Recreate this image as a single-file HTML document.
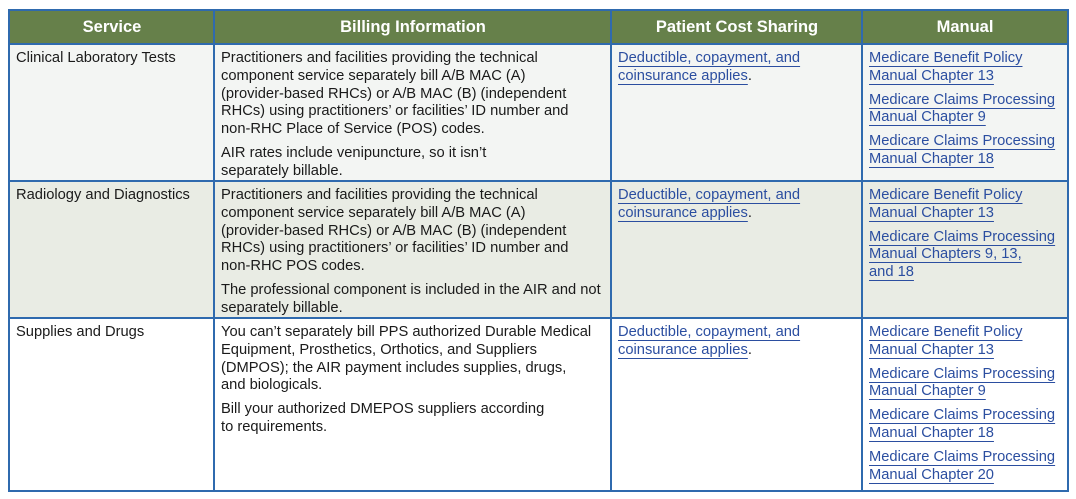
<!DOCTYPE html>
<html><head><meta charset="utf-8"><style>
*{margin:0;padding:0;box-sizing:border-box}
body{width:1076px;height:499px;background:#fff;font-family:"Liberation Sans",Arial,sans-serif;position:relative;overflow:hidden}
.c{position:absolute;border:2px solid #2f6aae;font-size:14.7px;line-height:17.8px;color:#1a1a1a;padding:5px 6px 0 6px;white-space:nowrap}
.h{background:#66804a;color:#fff;font-size:16.5px;font-weight:bold;text-align:center;line-height:32px;padding:0}
p{margin-bottom:6px}
a{color:#2b4ea0;text-decoration:underline;text-underline-offset:4px;text-decoration-thickness:1px}
.r1{background:#f3f5f3;top:43px;height:140px}
.r2{background:#e9ece4;top:180px;height:140px}
.r3{background:#fff;top:317px;height:175px}
.k1{left:8px;width:208px}.k2{left:213px;width:400px}.k3{left:610px;width:254px}.k4{left:861px;width:208px}
</style></head><body>
<div class="c h k1" style="top:9px;height:36px">Service</div>
<div class="c h k2" style="top:9px;height:36px">Billing Information</div>
<div class="c h k3" style="top:9px;height:36px">Patient Cost Sharing</div>
<div class="c h k4" style="top:9px;height:36px">Manual</div>

<div class="c r1 k1">Clinical Laboratory Tests</div>
<div class="c r1 k2"><p>Practitioners and facilities providing the technical<br>component service separately bill A/B MAC (A)<br>(provider-based RHCs) or A/B MAC (B) (independent<br>RHCs) using practitioners’ or facilities’ ID number and<br>non-RHC Place of Service (POS) codes.</p><p>AIR rates include venipuncture, so it isn’t<br>separately billable.</p></div>
<div class="c r1 k3"><a>Deductible, copayment, and </a><br><a>coinsurance applies</a>.</div>
<div class="c r1 k4"><p><a>Medicare Benefit Policy </a><br><a>Manual Chapter 13</a></p><p><a>Medicare Claims Processing </a><br><a>Manual Chapter 9</a></p><p><a>Medicare Claims Processing </a><br><a>Manual Chapter 18</a></p></div>

<div class="c r2 k1">Radiology and Diagnostics</div>
<div class="c r2 k2"><p>Practitioners and facilities providing the technical<br>component service separately bill A/B MAC (A)<br>(provider-based RHCs) or A/B MAC (B) (independent<br>RHCs) using practitioners’ or facilities’ ID number and<br>non-RHC POS codes.</p><p>The professional component is included in the AIR and not<br>separately billable.</p></div>
<div class="c r2 k3"><a>Deductible, copayment, and </a><br><a>coinsurance applies</a>.</div>
<div class="c r2 k4"><p><a>Medicare Benefit Policy </a><br><a>Manual Chapter 13</a></p><p><a>Medicare Claims Processing </a><br><a>Manual Chapters 9, 13, </a><br><a>and 18</a></p></div>

<div class="c r3 k1">Supplies and Drugs</div>
<div class="c r3 k2"><p>You can’t separately bill PPS authorized Durable Medical<br>Equipment, Prosthetics, Orthotics, and Suppliers<br>(DMPOS); the AIR payment includes supplies, drugs,<br>and biologicals.</p><p>Bill your authorized DMEPOS suppliers according<br>to requirements.</p></div>
<div class="c r3 k3"><a>Deductible, copayment, and </a><br><a>coinsurance applies</a>.</div>
<div class="c r3 k4"><p><a>Medicare Benefit Policy </a><br><a>Manual Chapter 13</a></p><p><a>Medicare Claims Processing </a><br><a>Manual Chapter 9</a></p><p><a>Medicare Claims Processing </a><br><a>Manual Chapter 18</a></p><p><a>Medicare Claims Processing </a><br><a>Manual Chapter 20</a></p></div>
</body></html>
